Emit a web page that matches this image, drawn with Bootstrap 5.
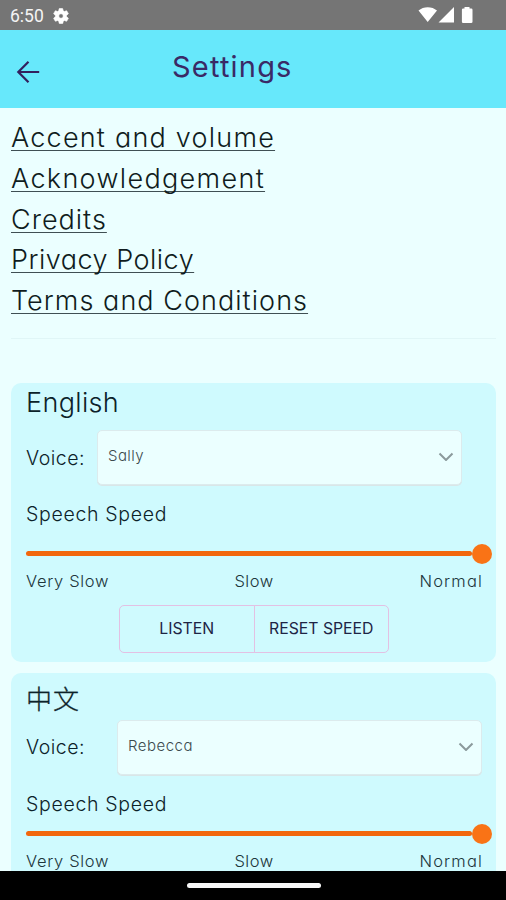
<!DOCTYPE html>
<html lang="en">
<head>
<meta charset="utf-8">
<meta name="viewport" content="width=device-width, initial-scale=1">
<title>Settings</title>
<link href="https://cdn.jsdelivr.net/npm/bootstrap@5.3.0/dist/css/bootstrap.min.css" rel="stylesheet">
<style>
body{font-family:Inter,"Noto Sans CJK SC",sans-serif;font-feature-settings:"cv11";font-weight:300;background:#ebffff;color:#0c2229;height:900px}
.status-bar{height:30px;background:#757575;color:#f4f4f4;font:400 17.5px/30px Roboto,sans-serif;padding:2px 32px 0 10px}
.app-bar{height:78px;background:#67e8fb;color:#3a2a66}
.app-bar .back{width:172px;padding:4px 0 0 16px}
.app-title{font-size:29px;font-weight:400;letter-spacing:1.2px;line-height:34px;margin-top:-5px}
.page-links{padding:10px 11px 0}
.page-links a{font-size:27px;line-height:40.75px;height:40.75px;color:#101c20;text-decoration:underline;text-decoration-color:#3f4f53;text-decoration-thickness:1px;text-underline-offset:3px;text-decoration-skip-ink:none}
.rule{height:1px;background:#e0f6f7;margin:16px 10px 44px 11px}
.voice-card{background:#cffafe;border-radius:10px;margin:0 10px 11px 11px;padding:0 14px 0 15px;height:279px}
.lang-name{font-size:27px;line-height:36px;height:47px;padding-top:2px;letter-spacing:.35px}
.lang-name.zh{font-size:26px;padding-top:9px;letter-spacing:.9px;-webkit-text-stroke:.3px #0c2229}
.field-label{font-size:19.5px;line-height:24px}
.voice-label{width:71px;letter-spacing:.5px;padding-top:1px}
.voice-label.wide{width:91px;padding-top:0}
.voice-select{width:365px;height:55px;border:1px solid #dcebed;border-radius:5px;background:#ebffff;padding:0 7px 3px 10px;font-size:15px;color:#3b4a4e;box-shadow:0 1px 0 #d9e6e8}
.speed-label{letter-spacing:.68px;margin-top:17px}
.slider{height:20px;margin-top:18px}
.slider.tight{margin-top:8px}
.track{height:4.6px;background:#f2670c;border-radius:3px}
.thumb{width:20px;height:20px;border-radius:50%;background:#f97316;margin-right:-10px;flex:none}
.ticks{font-size:16.500px;line-height:20px;color:#20353b;margin-top:7px}
.actions{width:270px;margin:14px 0 0 93px}
.actions .btn{height:48px;border:1.500px solid #e3c0e3;border-radius:5px;font-size:15.800px;color:#1d2445;width:135px;padding:0;font-weight:400}
.nav-strip{height:29px;background:#000;padding-left:1px}
.nav-strip div{width:134px;height:5px;border-radius:3px;background:#f7f7f7}
.ls-a{letter-spacing:1.220px}.ls-b{letter-spacing:1.330px}.ls-c{letter-spacing:1px}.ls-d{letter-spacing:.5px}.ls-e{letter-spacing:1.050px}
.ls-g{letter-spacing:.66px}.ls-h{letter-spacing:.5px}.ls-i{letter-spacing:1.150px;margin-right:-1px}.ls-j{letter-spacing:.4px}
</style>
<script src="https://cdn.jsdelivr.net/npm/bootstrap@5.3.0/dist/js/bootstrap.bundle.min.js"></script>
</head>
<body class="d-flex flex-column overflow-hidden">
<div class="status-bar d-flex align-items-center flex-shrink-0">
  <span>6:50</span>
  <svg class="ms-2" width="18" height="18" viewBox="0 0 24 24" fill="#fff"><path d="M19.4 13c.1-.3.1-.7.1-1s0-.7-.1-1l2.2-1.7c.2-.1.2-.4.1-.6l-2-3.500c-.1-.2-.4-.3-.6-.2l-2.600 1c-.5-.4-1.100-.7-1.700-1L14.400 2.400c0-.2-.2-.4-.5-.4h-4c-.2 0-.4.2-.5.4L9.100 5c-.6.3-1.200.6-1.700 1l-2.500-1c-.2-.1-.5 0-.6.2l-2 3.500c-.1.2-.1.4.1.6L4.500 11c0 .3-.1.7-.1 1s0 .7.1 1l-2.100 1.700c-.2.1-.2.4-.1.6l2 3.500c.1.2.4.300.6.2l2.500-1c.5.4 1.100.7 1.700 1l.4 2.600c0 .2.2.4.5.4h4c.2 0 .5-.2.5-.4l.4-2.600c.6-.3 1.200-.6 1.700-1l2.500 1c.2.1.5 0 .6-.2l2-3.500c.1-.2.1-.4-.1-.6L19.400 13zM12 15a3 3 0 1 1 0-6 3 3 0 0 1 0 6z" stroke="#fff" stroke-width=".8"/></svg>
  <svg class="ms-auto" width="56" height="18" viewBox="0 0 56 18" fill="#fff"><path d="M.5 3.500C5.500-1 14-1 19 3.500L9.700 15z M20.500 15.500h15.500V0z M46.500 1.500V.1h5v1.400h1.700q1.300 0 1.300 1.300v12q0 1.200-1.300 1.200h-8q-1.300 0-1.300-1.200v-12q0-1.300 1.300-1.300z"/></svg>
</div>
<header class="app-bar d-flex align-items-center flex-shrink-0">
  <div class="back"><svg width="25" height="24" viewBox="0 0 25 24" fill="none" stroke="#32205e" stroke-width="2.200"><path d="M23.200 12H2.500M12.500 1.800L2.300 12l10.200 10.200"/></svg></div>
  <h1 class="app-title mb-0">Settings</h1>
</header>
<main class="flex-grow-1 overflow-hidden">
  <nav class="page-links d-flex flex-column align-items-start">
    <a href="#" class="ls-a">Accent and volume</a>
    <a href="#" class="ls-b">Acknowledgement</a>
    <a href="#" class="ls-c">Credits</a>
    <a href="#" class="ls-d">Privacy Policy</a>
    <a href="#" class="ls-e">Terms and Conditions</a>
  </nav>
  <div class="rule"></div>
  <section class="voice-card">
    <div class="lang-name">English</div>
    <div class="d-flex align-items-center">
      <div class="field-label voice-label">Voice:</div>
      <div class="voice-select d-flex align-items-center justify-content-between"><span class="ls-j">Sally</span>
        <svg width="16" height="10" viewBox="0 0 16 10" fill="none" stroke="#8b9a9c" stroke-width="2"><path d="M1.500 2.500L8 9l6.500-6.500"/></svg></div>
    </div>
    <div class="field-label speed-label">Speech Speed</div>
    <div class="slider d-flex align-items-center"><div class="track flex-grow-1"></div><div class="thumb"></div></div>
    <div class="ticks row g-0"><div class="col ls-g">Very Slow</div><div class="col text-center ls-h">Slow</div><div class="col text-end"><span class="ls-i">Normal</span></div></div>
    <div class="btn-group actions"><button class="btn">LISTEN</button><button class="btn">RESET SPEED</button></div>
  </section>
  <section class="voice-card">
    <div class="lang-name zh" lang="zh">中文</div>
    <div class="d-flex align-items-center">
      <div class="field-label voice-label wide">Voice:</div>
      <div class="voice-select d-flex align-items-center justify-content-between"><span class="ls-h">Rebecca</span>
        <svg width="16" height="10" viewBox="0 0 16 10" fill="none" stroke="#8b9a9c" stroke-width="2"><path d="M1.500 2.500L8 9l6.500-6.500"/></svg></div>
    </div>
    <div class="field-label speed-label">Speech Speed</div>
    <div class="slider tight d-flex align-items-center"><div class="track flex-grow-1"></div><div class="thumb"></div></div>
    <div class="ticks row g-0"><div class="col ls-g">Very Slow</div><div class="col text-center ls-h">Slow</div><div class="col text-end"><span class="ls-i">Normal</span></div></div>
  </section>
</main>
<footer class="nav-strip d-flex align-items-center justify-content-center flex-shrink-0"><div></div></footer>
</body>
</html>
